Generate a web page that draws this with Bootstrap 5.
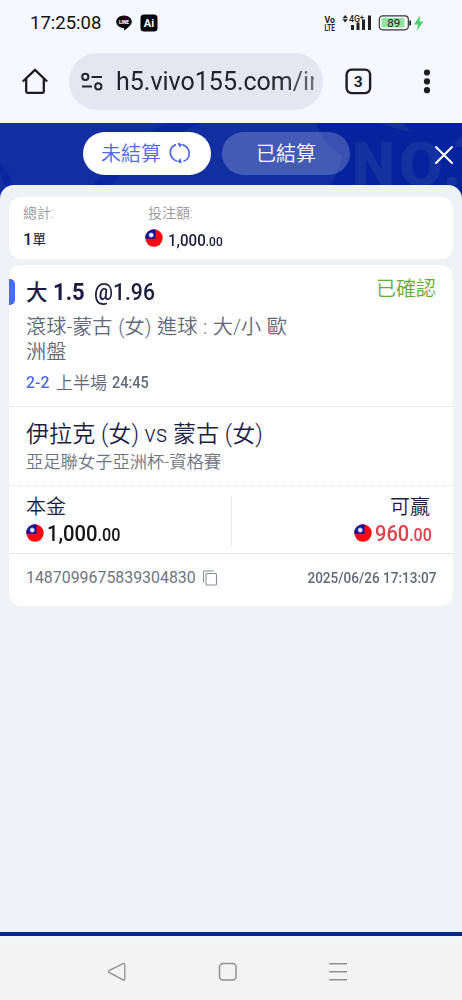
<!DOCTYPE html>
<html lang="zh-Hant">
<head>
<meta charset="utf-8">
<meta name="viewport" content="width=device-width, initial-scale=1">
<title>注單</title>
<link href="https://cdn.jsdelivr.net/npm/bootstrap@5.3.0/dist/css/bootstrap.min.css" rel="stylesheet">
<style>
body{font-family:Roboto,"Noto Sans CJK TC",sans-serif;height:1000px;overflow:hidden;background:#f5f8fe;color:#1b1c3f;line-height:1}
svg{display:block;flex:none}
.t{white-space:nowrap;line-height:1;display:inline-block;transform-origin:0 50%}
.cjk{font-weight:350}
.status{height:46px;padding-left:30px;color:#111}
.urlbar{height:77px;padding:7px 0 0 22px}
.pill{width:254px;height:57px;border-radius:29px;background:#e2e7f1;padding-left:12px;color:#202329}
.url{width:198px;overflow:hidden;font-size:25px;line-height:32px;white-space:nowrap;margin-left:13px;-webkit-mask-image:linear-gradient(90deg,#000 82%,#0009)}
.app{height:813px;background:#122fa2}
.tabs{height:62px;padding:0 0 1px 83px}
.tab{width:128px;height:43px;border-radius:22px;font-size:20px;border:0;padding:0;line-height:1}
.tab-on{background:#fff;color:#5169e2;padding-right:2px}
.tab-off{background:rgba(255,255,255,.21);color:#fff;margin-left:11px}
.panel{height:747px;border-radius:14px 14px 0 0;background:#eef2f5;padding:12px 9px 0}
.box{background:#fff;border-radius:12px}
.sum{height:62px;padding:9px 14px 0}
.lab{font-size:14px;color:#999;font-weight:350;height:14px}
.bet{height:341px;margin-top:6px}
.top-part{height:142px;border-bottom:1px solid #e6e8ea}
.bar{width:6px;height:26px;border-radius:0 5px 5px 0;background:#4a6cf7;margin-right:11px}
.grayt{color:#62687a}
.match{height:79px;padding:16px 17px 0;border-bottom:1px dotted #dcdfe3}
.money{height:68px;border-bottom:1px solid #e3e5e8;padding:11px 22px 0 17px}
.midline{width:1px;height:50px;background:#e8eaee;margin-top:-1px}
.bottom-edge{height:4px;background:#04298c}
.sys{height:58px;background:#f3f3f3;padding-top:1px}
.gap-strip{height:6px;background:#f3f5fb}
</style>
</head>
<body>
<svg width="0" height="0" class="position-absolute"><defs>
<clipPath id="disc"><circle cx="9" cy="9" r="8.7"/></clipPath>
<symbol id="flag" viewBox="0 0 18 18"><g clip-path="url(#disc)"><path d="M0 0h18v18H0z" fill="#f60a13"/><path d="M0 0h10.5v9.7H0z" fill="#10149b"/><circle cx="6.2" cy="6.1" r="2.5" fill="#9fb0ee"/><circle cx="6.2" cy="6.1" r="1.6" fill="#fff"/></g></symbol>
</defs></svg>

<div class="status d-flex align-items-center">
  <span class="t" style="width:72px;font-size:18.500px">17:25:08</span>
  <svg width="16" height="16" viewBox="0 0 16 16" style="margin-left:14px"><path d="M8 .5c4.3 0 7.8 2.8 7.8 6.3 0 3.2-4.5 6.6-7.4 8.7-.6.2-.3-1-.3-2.3C3.600 13 .2 10.200.2 6.800.200 3.300 3.700.5 8 .5z" fill="#050505"/><text x="8" y="8.800" text-anchor="middle" font-size="4.800" font-weight="900" fill="#fff">LINE</text></svg>
  <svg width="18" height="18" viewBox="0 0 18 18" style="margin-left:8px"><rect x=".5" y=".5" width="17" height="17" rx="3.500" fill="#050505"/><text x="9" y="13" text-anchor="middle" font-size="11" font-weight="700" fill="#fff">Ai</text></svg>
  <svg width="104" height="20" viewBox="323 13 104 20" style="margin-left:165px" fill="#222">
    <g font-weight="700" font-size="9"><text x="324.500" y="22.500" textLength="10.500" lengthAdjust="spacingAndGlyphs">Vo</text><text x="324.500" y="30.500" textLength="10.500" lengthAdjust="spacingAndGlyphs">LTE</text></g>
    <path d="M342.500 18.200l2.700-3.200 2.700 3.200zM342.500 19.300l2.700 3.200 2.700-3.200z"/>
    <text x="349" y="21.800" font-size="9.500" font-weight="500" textLength="11" lengthAdjust="spacingAndGlyphs">4G</text><text x="360" y="19.500" font-size="7" font-weight="700">+</text>
    <path d="M351 25h3v5h-3zM356.500 22.500h3V30h-3zM362 19.500h3V30h-3zM368 15.500h3V30h-3z"/>
    <rect x="379.300" y="15.800" width="29" height="14" rx="3.500" fill="#fff" stroke="#333" stroke-width="1.200"/><rect x="381.500" y="18" width="23" height="9.600" rx="1.500" fill="#93e1a2"/>
    <path d="M409.300 20.500h1.700v5h-1.700z"/>
    <text x="393.800" y="27" text-anchor="middle" font-size="11.500">89</text>
    <path d="M420 15.500l-6 9h4l-1.500 6.500 7-9.500h-4z" fill="#48ce68"/>
  </svg>
</div>

<div class="urlbar d-flex align-items-start">
  <svg width="26" height="26" viewBox="0 0 26 26" style="margin-top:15px" fill="none" stroke="#1b1d20" stroke-width="2.300" stroke-linejoin="round"><path d="M.8 13.500L13 1.800l12.200 11.700M4.200 11v12.500q0 1.300 1.300 1.300h15q1.300 0 1.300-1.300V11"/></svg>
  <div class="pill d-flex align-items-center" style="margin-left:21px">
    <svg width="22" height="20" viewBox="0 0 22 20" fill="none" stroke="#222529" stroke-width="2"><circle cx="4.300" cy="4.900" r="3.100"/><path d="M10.500 5H21M1 14.500h10"/><circle cx="17.300" cy="14.400" r="3.100"/></svg>
    <div class="url">h5.vivo155.com/in</div>
  </div>
  <svg width="27" height="27" viewBox="0 0 27 27" style="margin:15px 0 0 22px"><rect x="1.600" y="1.600" width="23.500" height="23.500" rx="5" fill="none" stroke="#1b1d20" stroke-width="2.400"/><text x="13.300" y="19" text-anchor="middle" font-size="15.500" font-weight="700" fill="#1b1d20">3</text></svg>
  <svg width="8" height="25" viewBox="0 0 8 25" style="margin:16px 0 0 51px" fill="#1b1d20"><circle cx="4" cy="3.500" r="3.100"/><circle cx="4" cy="12.400" r="3.100"/><circle cx="4" cy="21.200" r="3.100"/></svg>
</div>

<div class="app position-relative d-flex flex-column">
  <svg class="position-absolute top-0 start-0" width="462" height="80" viewBox="0 123 462 80"><path d="M316 123H462V203H320Q338 176 342 156Q322 143 316 123z" fill="#04239c"/><path d="M165 123H200Q140 150 110 186H92Q125 145 165 123zM0 163q9 10 14 23H5L0 174z" fill="#08269d"/><path d="M380 123H403l9 9q-16-2-32-9z" fill="#112f9f"/><g font-family="Roboto" font-weight="900" font-size="61" fill="#1431a0"><text x="352" y="186" textLength="43" lengthAdjust="spacingAndGlyphs">N</text><text x="399" y="186" textLength="44" lengthAdjust="spacingAndGlyphs">O</text><text x="443" y="186">.</text></g><path d="M455 142l7-7v12h-7z" fill="#122f9f"/></svg>
  <div class="tabs position-relative d-flex align-items-center">
    <button class="tab tab-on cjk d-flex align-items-center justify-content-center"><span class="t">未結算</span>
      <svg width="22" height="22" viewBox="0 0 22 22" style="margin:-2px 0 0 8px" fill="none" stroke="#4c67e8" stroke-width="1.700"><path d="M8 19.300C-.5 16-1 5.500 7 2.600M13.500 2.600c8.500 3.300 9 13.800 1 16.700M10 19.800h1.500M10.500 2.200h-1"/><path d="M9 .8l4.500 1.500-3.200 3.500zM12.800 21.200l-4.500-1.500 3.200-3.500z" fill="#4c67e8" stroke="none"/></svg></button>
    <button class="tab tab-off cjk"><span class="t">已結算</span></button>
    <svg width="20" height="20" viewBox="0 0 20 20" style="margin:2px 0 0 84px" stroke="#fff" stroke-width="2.100" stroke-linecap="round"><path d="M2 2l16 16M18 2L2 18"/></svg>
  </div>
  <div class="panel position-relative">
    <div class="box sum d-flex">
      <div style="width:122px"><div class="lab">總計:</div><div class="d-flex align-items-center" style="margin-top:10px;height:20px"><span class="t fw-medium" style="font-size:16.500px">1</span><span class="t" style="font-size:13.500px">單</span></div></div>
      <div><div class="lab" style="padding-left:3px">投注額:</div><div class="d-flex align-items-center" style="margin-top:10px;height:20px"><svg width="18" height="18" style="margin-top:-5px"><use href="#flag"/></svg><span class="t" style="font-size:17px;font-weight:500;margin-left:5px;transform:scaleX(.89)">1,000<span style="font-size:13.500px">.00</span></span></div></div>
    </div>
    <div class="box bet">
      <div class="top-part">
        <div class="d-flex align-items-start" style="padding:14px 17px 0 0">
          <div class="bar"></div>
          <div class="d-flex align-items-center" style="height:27px"><span class="t fw-bold" style="font-size:23px;width:68px"><span class="fw-medium" style="font-size:21.500px">大</span> <span class="t" style="transform:scaleX(.96)">1.5</span></span><span class="t fw-medium" style="font-size:23.500px;transform:scaleX(.9)">@1.96</span></div>
          <span class="t ms-auto cjk" style="font-size:20px;color:#5fae36">已確認</span>
        </div>
        <div class="grayt cjk" style="font-size:20.200px;line-height:24.500px;width:275px;margin:9px 0 0 17px;word-spacing:.7px">滾球-蒙古 (女) 進球 : 大/小 歐<br>洲盤</div>
        <div class="d-flex align-items-center grayt" style="height:20px;margin:9px 0 0 17px"><span class="t fw-medium" style="font-size:16.500px;color:#4a6ce8;width:30px;transform:scaleX(.96)">2-2</span><span class="t cjk" style="font-size:17px">上半場</span><span class="t fw-medium" style="font-size:16.500px;margin-left:5px;transform:scaleX(.88)">24:45</span></div>
      </div>
      <div class="match"><div class="t d-block cjk" style="font-size:23.100px;height:24px">伊拉克 (女) vs 蒙古 (女)</div><div class="t d-block cjk" style="font-size:17.300px;color:#6f7484;margin-top:7px">亞足聯女子亞洲杯-資格賽</div></div>
      <div class="money d-flex">
        <div style="width:205px"><span class="t d-block cjk" style="font-size:20px;height:25px">本金</span><div class="d-flex align-items-center" style="height:22px"><svg width="18" height="18"><use href="#flag"/></svg><span class="t fw-medium" style="color:#161616;font-size:22.500px;margin-left:3px;transform:scaleX(.9)">1,000<span style="font-size:18px">.00</span></span></div></div>
        <div class="midline"></div>
        <div class="ms-auto text-end"><span class="t d-block cjk" style="font-size:20px;height:25px;padding-right:1px">可贏</span><div class="d-flex align-items-center" style="height:22px;width:77px"><svg width="18" height="18"><use href="#flag"/></svg><span class="t fw-medium" style="color:#df414e;font-size:22.500px;margin-left:3px;transform:scaleX(.89)">960<span style="font-size:18px">.00</span></span></div></div>
      </div>
      <div class="d-flex align-items-center" style="height:48px;padding:0 17px"><span class="t" style="font-size:15.900px;color:#6f7480">1487099675839304830</span>
        <svg width="16" height="16" viewBox="0 0 16 16" style="margin-left:6px" fill="none" stroke="#888d95" stroke-width="1.100"><rect x="4" y="3.500" width="10.500" height="11.500" rx="1"/><path d="M1.500 12.500V2q0-1 1-1H12"/></svg>
        <span class="t fw-medium ms-auto grayt" style="font-size:15.500px;margin-top:1px;transform:scaleX(.875);transform-origin:100% 50%">2025/06/26 17:13:07</span></div>
    </div>
  </div>
  <div class="bottom-edge position-relative"></div>
</div>
<div class="gap-strip"></div>
<div class="sys d-flex align-items-center">
  <svg width="20" height="20" viewBox="0 0 20 20" style="margin:0 0 0 107px" fill="none" stroke="#909090" stroke-width="1.300" stroke-linejoin="round"><path d="M16 1.600L2.500 8.300q-2 1.200 0 2.400L16 17.800q1.800.7 1.800-1.200V2.800q0-1.900-1.800-1.200z"/></svg>
  <svg width="20" height="20" viewBox="0 0 20 20" style="margin-left:91px" fill="none" stroke="#909090" stroke-width="1.500"><rect x="1.500" y="1.500" width="16.500" height="16.500" rx="3.500"/></svg>
  <svg width="20" height="20" viewBox="0 0 20 20" style="margin-left:90px" stroke="#909090" stroke-width="1.500"><path d="M1 1.800h18M1 9.800h18M1 17.800h18"/></svg>
</div>
</body>
</html>
